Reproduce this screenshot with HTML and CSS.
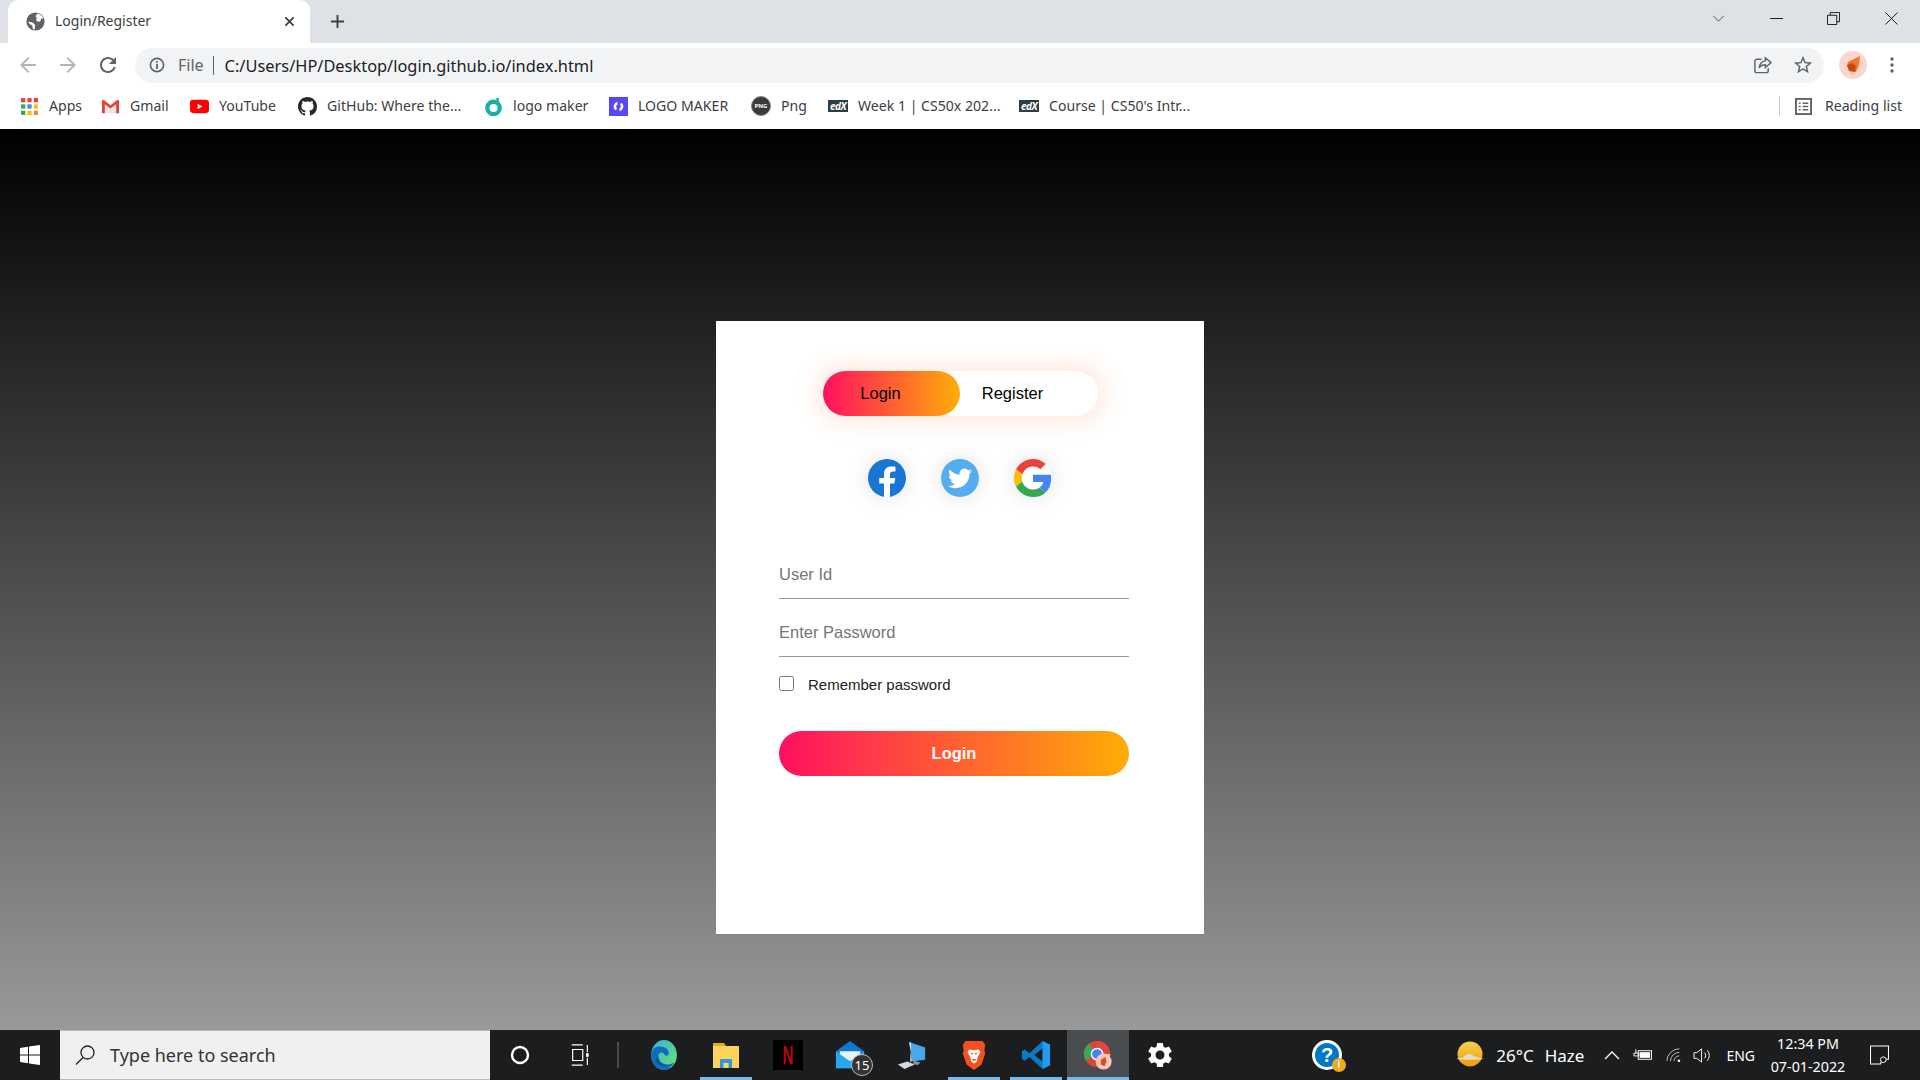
FILE: index.html
```html
<!DOCTYPE html>
<html lang="en">
<head>
  <meta charset="UTF-8" />
  <meta name="viewport" content="width=device-width, initial-scale=1.0"/>
  <title>Login/Register</title>
  <link rel="stylesheet" href="styles.css">
</head>
<body>
  <!-- tab strip -->
  <div class="tabstrip">
    <div class="tab">
      <svg class="favicon" viewBox="0 0 24 24"><circle cx="12" cy="12" r="11.500" fill="#5f6368"/><path fill="#fff" d="M12 5.500l2.500-3.500c3.500.8 6 3 7.500 6l-3 .5-1 3.500h-4l-1.500-2.500 1.500-1.500zM3 12l6 1.500 2.500 3-.5 5.500c-1 0-2-.5-2.500-.8l-.5-4.200-3.500-2z"/></svg>
      <span class="tab-title">Login/Register</span>
      <svg class="tab-close" viewBox="0 0 12 12"><path d="M1.500 1.500l9 9M10.500 1.500l-9 9" stroke="#3c4043" stroke-width="1.900" fill="none"/></svg>
    </div>
    <svg class="newtab" viewBox="0 0 16 16"><path d="M8 1v14M1 8h14" stroke="#3c4043" stroke-width="2" fill="none"/></svg>
    <div class="winctrl">
      <svg class="wc wc-chev" viewBox="0 0 14 8"><path d="M1 1l6 6 6-6" stroke="#3c4043" fill="none"/></svg>
      <svg class="wc wc-min" viewBox="0 0 14 14"><path d="M0 7h14" stroke="#111" fill="none"/></svg>
      <svg class="wc wc-max" viewBox="0 0 14 14"><path d="M.5 3.500h10v10H.5zM3.500 3.500V.5h10v10h-3" stroke="#111" fill="none"/></svg>
      <svg class="wc wc-close" viewBox="0 0 14 14"><path d="M.5.5l13 13M13.500.5l-13 13" stroke="#111" fill="none"/></svg>
    </div>
  </div>

  <!-- toolbar -->
  <div class="toolbar">
    <svg class="tb-icon" viewBox="0 0 24 24"><path fill="#b4b7ba" d="M20 11H7.830l5.590-5.590L12 4l-8 8 8 8 1.410-1.410L7.830 13H20v-2z"/></svg>
    <svg class="tb-icon" viewBox="0 0 24 24"><path fill="#b4b7ba" d="M4 11h12.170l-5.590-5.590L12 4l8 8-8 8-1.410-1.410L16.170 13H4v-2z"/></svg>
    <svg class="tb-icon" viewBox="0 0 24 24"><path fill="#5f6368" d="M17.650 6.350C16.200 4.900 14.210 4 12 4c-4.420 0-7.990 3.580-7.990 8s3.570 8 7.990 8c3.730 0 6.840-2.550 7.730-6h-2.080c-.82 2.330-3.040 4-5.650 4-3.310 0-6-2.690-6-6s2.690-6 6-6c1.660 0 3.140.69 4.220 1.780L13 11h7V4l-2.350 2.350z"/></svg>
    <div class="omnibox">
      <svg class="info" viewBox="0 0 16 16"><circle cx="8" cy="8" r="6.600" stroke="#5f6368" stroke-width="1.600" fill="none"/><path d="M8 7v5M8 4v1.800" stroke="#5f6368" stroke-width="1.800" fill="none"/></svg>
      <span class="scheme">File</span>
      <span class="pipe"></span>
      <span class="url">C:/Users/HP/Desktop/login.github.io/index.html</span>
      <svg class="omni-share" viewBox="0 0 20 20"><path d="M9 3.500H4a2 2 0 0 0-2 2v10a2 2 0 0 0 2 2h10a2 2 0 0 0 2-2v-3" stroke="#5f6368" stroke-width="1.500" fill="none"/><path d="M13 2l6 5-6 5V9.200c-3 0-5 1-6.500 3.300C7 8.500 9.500 5.500 13 5.100z" stroke="#5f6368" stroke-width="1.500" fill="#f1f3f4"/></svg>
      <svg class="omni-star" viewBox="0 0 24 24"><path fill="#5f6368" d="M22 9.240l-7.190-.62L12 2 9.190 8.630 2 9.240l5.460 4.730L5.820 21 12 17.270 18.180 21l-1.630-7.030L22 9.240zM12 15.400l-3.760 2.270 1-4.280-3.320-2.880 4.380-.38L12 6.100l1.710 4.040 4.380.38-3.320 2.880 1 4.280L12 15.400z"/></svg>
    </div>
    <svg class="avatar" viewBox="0 0 28 28"><circle cx="14" cy="14" r="14" fill="#fbd5d0"/><path d="M9 11l6-3 6-3-1 9-3 7-6-2-3-4z" fill="#ee7a2c"/><path d="M8 14l5-2 4 3-1 6-6-1z" fill="#c9480f"/><path d="M11 21l5 0-1 3h-3z" fill="#eec98a"/></svg>
    <svg class="menu-dots" viewBox="0 0 4 16"><circle cx="2" cy="2" r="1.700" fill="#5f6368"/><circle cx="2" cy="8" r="1.700" fill="#5f6368"/><circle cx="2" cy="14" r="1.700" fill="#5f6368"/></svg>
  </div>

  <!-- bookmarks -->
  <div class="bookmarks">
    <div class="bm">
      <svg class="bm-icon" viewBox="0 0 18 18"><g><rect x="1" y="1" width="4" height="4" fill="#ea4335"/><rect x="7" y="1" width="4" height="4" fill="#ea4335"/><rect x="13" y="1" width="4" height="4" fill="#ea4335"/><rect x="1" y="7" width="4" height="4" fill="#34a853"/><rect x="7" y="7" width="4" height="4" fill="#4285f4"/><rect x="13" y="7" width="4" height="4" fill="#fbbc05"/><rect x="1" y="13" width="4" height="4" fill="#34a853"/><rect x="7" y="13" width="4" height="4" fill="#fbbc05"/><rect x="13" y="13" width="4" height="4" fill="#ea8a35"/></g></svg>
      <span class="bm-label">Apps</span>
    </div>
    <div class="bm">
      <svg class="bm-icon" viewBox="0 0 20 16"><path d="M1 15V2l9 7 9-7v13z" fill="#f1e4e2"/><path d="M1 15V2l3 2.400V15z" fill="#d6473b"/><path d="M19 15V2l-3 2.400V15z" fill="#d6473b"/><path d="M1 2c1-1.200 2-1 3 0l6 4.700L16 2c1-1 2-1.200 3 0v1.500l-9 6.500-9-6.500z" fill="#ea4335"/></svg>
      <span class="bm-label">Gmail</span>
    </div>
    <div class="bm">
      <svg class="bm-icon" viewBox="0 0 20 14"><rect width="20" height="14" rx="3.500" fill="#f00"/><path d="M8 4l5 3-5 3z" fill="#fff"/></svg>
      <span class="bm-label">YouTube</span>
    </div>
    <div class="bm">
      <svg class="bm-icon" viewBox="0 0 16 16"><path fill="#24292e" d="M8 0C3.580 0 0 3.580 0 8c0 3.540 2.290 6.530 5.470 7.590.4.070.55-.17.55-.38 0-.19-.01-.82-.01-1.490-2.010.37-2.530-.49-2.690-.94-.09-.23-.48-.94-.82-1.130-.28-.15-.68-.52-.01-.53.63-.01 1.080.58 1.230.82.72 1.210 1.870.87 2.330.66.070-.52.28-.87.51-1.070-1.780-.2-3.640-.89-3.640-3.950 0-.87.31-1.590.82-2.150-.08-.2-.36-1.020.08-2.120 0 0 .67-.21 2.200.82.64-.18 1.320-.27 2-.27.68 0 1.360.09 2 .27 1.530-1.040 2.200-.82 2.200-.82.44 1.100.16 1.920.08 2.120.51.56.82 1.270.82 2.150 0 3.070-1.870 3.750-3.650 3.950.29.25.54.73.54 1.480 0 1.070-.01 1.930-.01 2.200 0 .21.15.46.55.38A8.013 8.013 0 0016 8c0-4.420-3.580-8-8-8z"/></svg>
      <span class="bm-label">GitHub: Where the...</span>
    </div>
    <div class="bm">
      <svg class="bm-icon" viewBox="0 0 20 20"><circle cx="10" cy="11.500" r="6.500" stroke="#17b0a5" stroke-width="4.500" fill="none"/><path d="M13 1l3 0-1 5-2-1z" fill="#17b0a5"/></svg>
      <span class="bm-label">logo maker</span>
    </div>
    <div class="bm">
      <svg class="bm-icon" viewBox="0 0 20 20"><rect width="20" height="20" fill="#5546f6"/><path d="M9 5a5 5 0 0 0-2 9l1.500-2a2.500 2.500 0 0 1 .5-4.200zM11 15a5 5 0 0 0 2-9l-1.500 2a2.500 2.500 0 0 1-.5 4.200z" fill="#fff"/></svg>
      <span class="bm-label">LOGO MAKER</span>
    </div>
    <div class="bm">
      <span class="png-icon">PNG</span>
      <span class="bm-label">Png</span>
    </div>
    <div class="bm">
      <span class="edx-icon">edX</span>
      <span class="bm-label">Week 1 | CS50x 202...</span>
    </div>
    <div class="bm">
      <span class="edx-icon">edX</span>
      <span class="bm-label">Course | CS50's Intr...</span>
    </div>
    <div class="reading">
      <svg class="reading-icon" viewBox="0 0 18 18"><rect x="1" y="1" width="16" height="16" stroke="#5f6368" stroke-width="2" fill="none"/><path d="M4 5.500h2M8 5.500h6M4 9h2M8 9h6M4 12.500h2M8 12.500h6" stroke="#5f6368" stroke-width="1.500"/></svg>
      <span class="bm-label">Reading list</span>
    </div>
  </div>

  <!-- page -->
  <main class="page">
    <div class="form-box">
      <div class="button-box">
        <button class="toggle-btn toggle-active">Login</button>
        <button class="toggle-btn">Register</button>
      </div>
      <div class="social-icons">
        <span class="social">
          <svg viewBox="0 0 24 24"><path fill="#1976d2" d="M24 12.073c0-6.627-5.373-12-12-12s-12 5.373-12 12c0 5.990 4.388 10.954 10.125 11.854v-8.385H7.078v-3.470h3.047V9.430c0-3.007 1.792-4.669 4.533-4.669 1.312 0 2.686.235 2.686.235v2.953H15.830c-1.491 0-1.956.925-1.956 1.874v2.250h3.328l-.532 3.470h-2.796v8.385C19.612 23.027 24 18.062 24 12.073z"/></svg>
        </span>
        <span class="social">
          <svg viewBox="0 0 24 24"><circle cx="12" cy="12" r="12" fill="#55acee"/><path transform="translate(4.400 4.700) scale(.63)" fill="#fff" d="M23.953 4.570a10 10 0 01-2.825.775 4.958 4.958 0 002.163-2.723c-.951.555-2.005.959-3.127 1.184a4.920 4.920 0 00-8.384 4.482C7.690 8.095 4.067 6.130 1.640 3.162a4.822 4.822 0 00-.666 2.475c0 1.710.870 3.213 2.188 4.096a4.904 4.904 0 01-2.228-.616v.060a4.923 4.923 0 003.946 4.827 4.996 4.996 0 01-2.212.085 4.936 4.936 0 004.604 3.417 9.867 9.867 0 01-6.102 2.105c-.39 0-.779-.023-1.170-.067a13.995 13.995 0 007.557 2.209c9.053 0 13.998-7.496 13.998-13.985 0-.21 0-.42-.015-.63A9.935 9.935 0 0024 4.590z"/></svg>
        </span>
        <span class="social">
          <svg viewBox="0 0 48 48"><path fill="#EA4335" d="M24 9.500c3.540 0 6.710 1.220 9.210 3.600l6.850-6.850C35.900 2.380 30.470 0 24 0 14.620 0 6.510 5.380 2.560 13.220l7.980 6.190C12.430 13.720 17.740 9.500 24 9.500z"/><path fill="#4285F4" d="M46.980 24.550c0-1.570-.15-3.090-.38-4.550H24v9.020h12.940c-.58 2.960-2.260 5.480-4.780 7.180l7.730 6c4.510-4.180 7.090-10.360 7.090-17.650z"/><path fill="#FBBC05" d="M10.530 28.590c-.48-1.450-.76-2.990-.76-4.590s.27-3.140.76-4.590l-7.980-6.190C.92 16.460 0 20.120 0 24c0 3.880.92 7.540 2.560 10.780l7.970-6.190z"/><path fill="#34A853" d="M24 48c6.480 0 11.930-2.130 15.890-5.810l-7.730-6c-2.150 1.450-4.920 2.300-8.160 2.300-6.260 0-11.570-4.220-13.470-9.910l-7.980 6.190C6.510 42.620 14.620 48 24 48z"/></svg>
        </span>
      </div>
      <form class="input-group">
        <input class="input-field" type="text" placeholder="User Id">
        <input class="input-field" type="password" placeholder="Enter Password">
        <label class="remember"><input class="check-box" type="checkbox"><span class="remember-text">Remember password</span></label>
        <button class="submit-btn" type="button">Login</button>
      </form>
    </div>
  </main>

  <!-- taskbar -->
  <footer class="taskbar">
    <div class="start">
      <svg viewBox="0 0 20 20"><path fill="#fff" d="M0 3l8-1.200V9.500H0zM9 1.600L20 0v9.500H9zM0 10.500h8v7.700L0 17zM9 10.500h11V20L9 18.400z"/></svg>
    </div>
    <div class="search">
      <svg class="search-icon" viewBox="0 0 20 20"><circle cx="12.500" cy="7.500" r="6.500" stroke="#222" stroke-width="1.300" fill="none"/><path d="M8 12.500L1 19.500" stroke="#222" stroke-width="1.300"/></svg>
      <span>Type here to search</span>
    </div>
    <div class="tb-btn">
      <svg class="ic-cortana" viewBox="0 0 20 20"><circle cx="10" cy="10" r="8" stroke="#fff" stroke-width="2.400" fill="none"/></svg>
    </div>
    <div class="tb-btn">
      <svg class="ic-task" viewBox="0 0 20 24"><path d="M1 1h12M1 23h12M2 6h11v12H2zM18 1v8M18 15v8" stroke="#fff" stroke-width="1.300" fill="none"/><rect x="16.500" y="10" width="3" height="4" fill="#fff"/></svg>
    </div>
    <span class="tb-sep"></span>

    <div class="app">
      <svg viewBox="0 0 32 36"><defs><linearGradient id="edgeA" x1="0" y1="0" x2="1" y2="1"><stop offset="0" stop-color="#2fb5dc"/><stop offset="1" stop-color="#74df6c"/></linearGradient></defs><ellipse cx="16" cy="18" rx="15.500" ry="18" fill="url(#edgeA)"/><path d="M.5 18C1 8 10 6 17 9c6 3 6 10 2 10-3 0-2-4-6-4-5 0-5 8 0 12 4 3 10 3 15 0-3 6-8 9-12 9C7 36 .5 28 .5 18z" fill="#0f6cbd"/><path d="M9 20c0 7 6 11 12 10-5 3-14 0-15-7z" fill="#0a4d94"/></svg>
    </div>
    <div class="app app-open-split">
      <svg viewBox="0 0 28 30"><path d="M1 3h11l2 3v6H1z" fill="#e8a91c"/><rect x="1" y="6" width="26" height="22" fill="#fcd45c"/><path d="M8 28v-9h12v9h-3.500v-5h-5v5z" fill="#2d9be0"/></svg>
    </div>
    <div class="app">
      <div class="netflix"><span class="netflix-n">N</span></div>
    </div>
    <div class="app">
      <svg viewBox="0 0 32 32"><path d="M1 12L16 1l15 11v18H1z" fill="#0f78d4"/><path d="M5 12h22v4L16 23 5 16z" fill="#e8f3fb"/><path d="M1 12l15 11 15-11v18H1z" fill="#28a8ea"/></svg>
      <span class="badge">15</span>
    </div>
    <div class="app">
      <svg viewBox="0 0 32 32"><path d="M13 2l17 6v13l-14 2z" fill="#4aa8e8"/><path d="M13 2l2 1-1 20h2z" fill="#cfe2ee"/><path d="M1 26l10-3 8 3-11 5z" fill="#d7d9db"/><path d="M18 22l7 2-3 3-5-2z" fill="#8f9396"/></svg>
    </div>
    <div class="app app-open">
      <svg viewBox="0 0 26 32"><path d="M4 1h18l3 4-1 6 1 3-4 12-8 6-8-6L1 14l1-3-1-6z" fill="#f4511e"/><path d="M8 10l5 1 5-1 2 3-3 5-1 5-3 2-3-2-1-5-3-5z" fill="#fff"/><path d="M10 14l2 1M16 14l-2 1M11 21h4" stroke="#f4511e" stroke-width="1.500"/></svg>
    </div>
    <div class="app app-open">
      <svg viewBox="0 0 32 32"><path d="M23 1l8 4v22l-8 4L9 18l-5 4-3-2v-8l3-2 5 4z" fill="#0b7ac4"/><path d="M23 9L14 16l9 7z" fill="#1b1d1f"/><path d="M23 1l8 4v22l-8 4z" fill="#1f9cf0"/></svg>
    </div>
    <div class="app app-active">
      <svg viewBox="0 0 32 32"><circle cx="15" cy="15" r="14" fill="#db4437"/><path d="M15 15L3 22A14 14 0 0 1 6 4z" fill="#3aa757"/><path d="M15 1a14 14 0 0 1 13 9H15z" fill="#e2483c"/><path d="M15 15h14a14 14 0 0 1-4 10z" fill="#fcc934"/><circle cx="15" cy="15" r="6" fill="#4285f4" stroke="#fff" stroke-width="1.500"/><circle cx="22" cy="23" r="8.500" fill="#f7c6bf"/><path d="M19 21l5-3 1 5-2 5-4-2z" fill="#d65018"/></svg>
    </div>
    <div class="app">
      <svg class="ic-gear" viewBox="0 0 24 24"><path fill="#fff" d="M19.140 12.940c.04-.3.060-.61.060-.94 0-.32-.02-.64-.07-.94l2.030-1.580a.49.49 0 0 0 .12-.61l-1.920-3.320a.488.488 0 0 0-.59-.22l-2.390.96c-.5-.38-1.030-.7-1.620-.94l-.36-2.540a.484.484 0 0 0-.48-.41h-3.840c-.24 0-.43.170-.47.410l-.36 2.540c-.59.240-1.130.570-1.620.94l-2.390-.96c-.22-.08-.47 0-.59.220L2.740 8.870c-.12.210-.08.470.12.610l2.030 1.580c-.05.300-.09.630-.09.940s.02.640.07.940l-2.030 1.580a.49.49 0 0 0-.12.610l1.920 3.320c.12.220.37.290.59.220l2.390-.96c.5.380 1.030.7 1.620.94l.36 2.540c.05.240.24.410.48.410h3.840c.24 0 .44-.17.470-.41l.36-2.540c.59-.24 1.130-.56 1.620-.94l2.390.96c.22.080.47 0 .59-.22l1.920-3.320c.12-.22.070-.47-.12-.61l-2.010-1.580zM12 15.600c-1.980 0-3.600-1.620-3.600-3.600s1.620-3.600 3.600-3.600 3.600 1.620 3.600 3.600-1.620 3.600-3.600 3.600z"/></svg>
    </div>
    <div class="help">
      <span class="help-mark">?</span>
      <span class="help-info">i</span>
    </div>

    <div class="tray">
      <svg class="weather" viewBox="0 0 28 28"><defs><linearGradient id="sun" x1="0" y1="0" x2="0" y2="1"><stop offset="0" stop-color="#f7d046"/><stop offset="1" stop-color="#ee9a1a"/></linearGradient></defs><circle cx="14" cy="13" r="12.500" fill="url(#sun)"/><path d="M0 18c4-1 6-1.500 8-2 2-4 8-4 10-.5 3 0 6 1.500 10 2.500-8 1-20 1-28 0z" fill="#ecdcc0"/></svg>
      <span class="temp">26°C</span>
      <span class="haze">Haze</span>
      <svg class="tray-caret" viewBox="0 0 16 10"><path d="M1 9l7-7 7 7" stroke="#fff" stroke-width="1.300" fill="none"/></svg>
      <svg class="tray-batt" viewBox="0 0 20 14"><path d="M3 1v4M1 5h5v3H1z" stroke="#fff" fill="none"/><rect x="5.500" y="2.500" width="14" height="9" stroke="#fff" fill="none"/><rect x="7" y="4" width="11" height="6" fill="#fff"/></svg>
      <svg class="tray-wifi" viewBox="0 0 18 16"><path d="M1 15A14 14 0 0 1 15 1M5 15A10 10 0 0 1 15 5M9 15a6 6 0 0 1 6-6" stroke="#ccc" fill="none"/><circle cx="14.500" cy="14.500" r="1.500" fill="#fff"/></svg>
      <svg class="tray-vol" viewBox="0 0 20 18"><path d="M1 6h3l5-4v14l-5-4H1zM12 6a4 4 0 0 1 0 6M15 3.500a8 8 0 0 1 0 11" stroke="#fff" fill="none"/></svg>
      <span class="lang">ENG</span>
      <div class="clock"><span>12:34 PM</span><span>07-01-2022</span></div>
      <svg class="notif" viewBox="0 0 20 20"><path d="M.5.5h19v14H13L11 19.500H.5z" stroke="#fff" stroke-width="1.200" fill="none"/><circle cx="14" cy="15" r="3" stroke="#fff" fill="#1b1d1f"/></svg>
    </div>
  </footer>
</body>
</html>
```

FILE: styles.css
```css
* { box-sizing: border-box; }
html, body { margin: 0; height: 100%; }
body { display: flex; flex-direction: column; height: 1080px; overflow: hidden; font-family: "Noto Sans", sans-serif; background: #fff; }
svg { display: block; flex: none; }

/* tab strip */
.tabstrip { display: flex; align-items: center; height: 43px; padding-left: 8px; background: #dee1e6; }
.tab { display: flex; align-items: center; width: 302px; height: 43px; padding-left: 18px; background: #fff; border-radius: 10px 10px 0 0; }
.favicon { width: 19px; height: 19px; }
.tab-title { margin-left: 10px; margin-top: -2px; width: 229px; font-size: 14px; color: #3c4043; }
.tab-close { width: 11px; height: 11px; }
.newtab { width: 15px; height: 15px; margin-left: 20px; }
.winctrl { display: flex; align-items: center; margin-left: auto; height: 36px; margin-bottom: 7px; padding-right: 22px; }
.wc-chev { width: 13px; height: 7px; margin-right: 45px; }
.wc-min { width: 13px; height: 13px; margin-right: 44px; }
.wc-max { width: 13px; height: 13px; margin-right: 45px; }
.wc-close { width: 13px; height: 13px; }

/* toolbar */
.toolbar { display: flex; align-items: center; height: 42px; padding-top: 2px; padding-left: 16px; background: #fff; }
.tb-icon { width: 24px; height: 24px; margin-right: 16px; }
.omnibox { display: flex; align-items: center; width: 1689px; height: 35px; margin-left: -1px; padding-left: 14px; background: #f1f3f4; border-radius: 18px; }
.info { width: 16px; height: 16px; }
.scheme { margin-left: 13px; font-size: 16px; color: #5f6368; }
.pipe { width: 1px; height: 19px; margin-left: 9px; background: #5f6368; }
.url { margin-left: 11px; font-size: 16.400px; color: #202124; }
.omni-share { width: 19px; height: 19px; margin-left: auto; }
.omni-star { width: 22px; height: 22px; margin-left: 20px; margin-right: 10px; }
.avatar { width: 28px; height: 28px; margin-left: 15px; }
.menu-dots { width: 4px; height: 16px; margin-left: 23px; }

/* bookmarks */
.bookmarks { display: grid; grid-template-columns: 81px 89px 108px 186px 125px 142px 77px 191px 1fr auto; align-items: center; height: 44px; padding: 0 18px 2px 20px; background: #fff; }
.bm { display: flex; align-items: center; gap: 10px; font-size: 14.100px; color: #3c4043; white-space: nowrap; }
.bm-icon { width: 19px; height: 19px; }
.bm-label { padding-bottom: 2px; }
.png-icon { display: flex; align-items: center; justify-content: center; width: 20px; height: 20px; flex: none; border-radius: 50%; background: #3a3a3c; border: 1px solid #888; color: #fff; font-size: 6px; font-weight: 700; }
.edx-icon { display: flex; align-items: center; justify-content: center; width: 20px; height: 12px; flex: none; background: #2c3e3f; color: #fff; font-size: 10px; font-style: italic; font-weight: 700; letter-spacing: -.5px; }
.reading { display: flex; align-items: center; height: 20px; padding-left: 15px; border-left: 1px solid #ccc; font-size: 14.100px; color: #3c4043; }
.reading-icon { width: 17px; height: 17px; margin-right: 13px; }

/* page */
.page { display: flex; justify-content: center; flex: 1; padding-top: 192px; background: linear-gradient(#000, #999); }
.form-box { width: 488px; height: 613px; padding-top: 50px; background: #fff; }
.button-box { display: flex; width: 275px; height: 45px; margin-left: 107px; border-radius: 30px; box-shadow: 0 0 20px 9px #ff61241f; }
.toggle-btn { height: 45px; padding: 0; border: 0; background: transparent; font: 16.500px "Liberation Sans", Arial, sans-serif; color: #000; }
.toggle-btn:first-child { width: 137px; padding-right: 22px; }
.toggle-btn:last-child { width: 138px; padding-right: 33px; }
.toggle-active { background: linear-gradient(to right, #ff105f, #ffad06); border-radius: 30px; }
.social-icons { display: flex; justify-content: center; gap: 35px; margin-top: 43px; }
.social { width: 38px; height: 38px; border-radius: 50%; box-shadow: 0 0 20px 0 #7f7f7f3d; background: #fff; }
.social svg { width: 38px; height: 38px; }
.input-group { display: flex; flex-direction: column; width: 350px; margin-top: 62px; margin-left: 63px; }
.input-field { width: 100%; height: 40px; padding: 0 0 9px; border: 0; border-bottom: 1px solid #999; outline: 0; background: transparent; font: 16.500px "Liberation Sans", Arial, sans-serif; }
.input-field + .input-field { margin-top: 18px; }
.remember { display: flex; align-items: center; margin-top: 17px; font: 15px "Liberation Sans", Arial, sans-serif; color: #222; }
.remember-text { padding-top: 2px; }
.check-box { width: 15px; height: 15px; margin: 0 14px 0 0; }
.submit-btn { height: 45px; margin-top: 38px; border: 0; border-radius: 30px; background: linear-gradient(to right, #ff105f, #ffad06); color: #fff; font: 700 16.500px "Liberation Sans", Arial, sans-serif; }

/* taskbar */
.taskbar { display: flex; align-items: center; height: 50px; background: #1b1d1f; color: #fff; }
.start { display: flex; justify-content: center; width: 60px; }
.start svg { width: 20px; height: 20px; }
.search { display: flex; align-items: center; width: 430px; height: 50px; padding-left: 15px; background: #f0f0f0; border-top: 1px solid #b9b9b9; border-bottom: 1px solid #b9b9b9; color: #333; font-size: 18px; }
.search-icon { width: 20px; height: 20px; margin-right: 15px; }
.tb-btn { display: flex; justify-content: center; width: 60px; }
.ic-cortana { width: 20px; height: 20px; }
.ic-task { width: 20px; height: 22px; }
.tb-sep { width: 2px; height: 26px; margin-left: 7px; margin-right: 14px; background: #4a4c4e; }
.app { position: relative; display: flex; align-items: center; justify-content: center; width: 62px; height: 50px; }
.app svg { width: 30px; height: 30px; }
.app .ic-gear { width: 30px; height: 30px; }
.app-open::after, .app-active::after, .app-open-split::after { content: ""; position: absolute; left: 5px; right: 5px; bottom: 0; height: 3px; background: #76b9ed; }
.app-active { background: #4a4d50; }
.app-active::after { left: 0; right: 0; }
.netflix { display: flex; align-items: center; justify-content: center; width: 30px; height: 30px; background: #000; }
.netflix-n { color: #b8060e; font: 700 25px "Liberation Sans", Arial, sans-serif; transform: scaleX(.6); }
.badge { position: absolute; right: 8px; bottom: 4px; width: 22px; height: 22px; border: 1px solid #bbb; border-radius: 50%; background: #333; color: #fff; font-size: 13px; line-height: 20px; text-align: center; }
.help { position: relative; width: 30px; height: 30px; margin-left: 121px; background: #fff; border-radius: 50%; }
.help-mark { display: block; width: 24px; height: 24px; margin: 3px; border-radius: 50%; background: #0078c8; color: #fff; font: 700 20px/24px "Liberation Sans", Arial, sans-serif; text-align: center; }
.help-info { position: absolute; right: -4px; bottom: -2px; width: 14px; height: 14px; border-radius: 50%; background: #f2a922; color: #fff; font: 700 10px/14px "Liberation Sans", Arial, sans-serif; text-align: center; }
.tray { display: flex; align-items: center; margin-left: auto; padding-right: 31px; font-size: 14px; }
.weather { width: 28px; height: 28px; margin-left: -2px; }
.temp { margin-left: 12px; font-size: 17px; }
.haze { margin-left: 11px; font-size: 17px; }
.tray-caret { width: 16px; height: 10px; margin-left: 20px; }
.tray-batt { width: 19px; height: 14px; margin-left: 13px; }
.tray-wifi { width: 16px; height: 16px; margin-left: 14px; }
.tray-vol { width: 19px; height: 17px; margin-left: 11px; }
.lang { margin-left: 14px; font-size: 14px; }
.clock { display: flex; flex-direction: column; align-items: center; gap: 6px; width: 76px; margin-top: -1px; margin-left: 15px; font-size: 14.300px; line-height: 17px; }
.notif { width: 19px; height: 20px; margin-left: 24px; }
```
